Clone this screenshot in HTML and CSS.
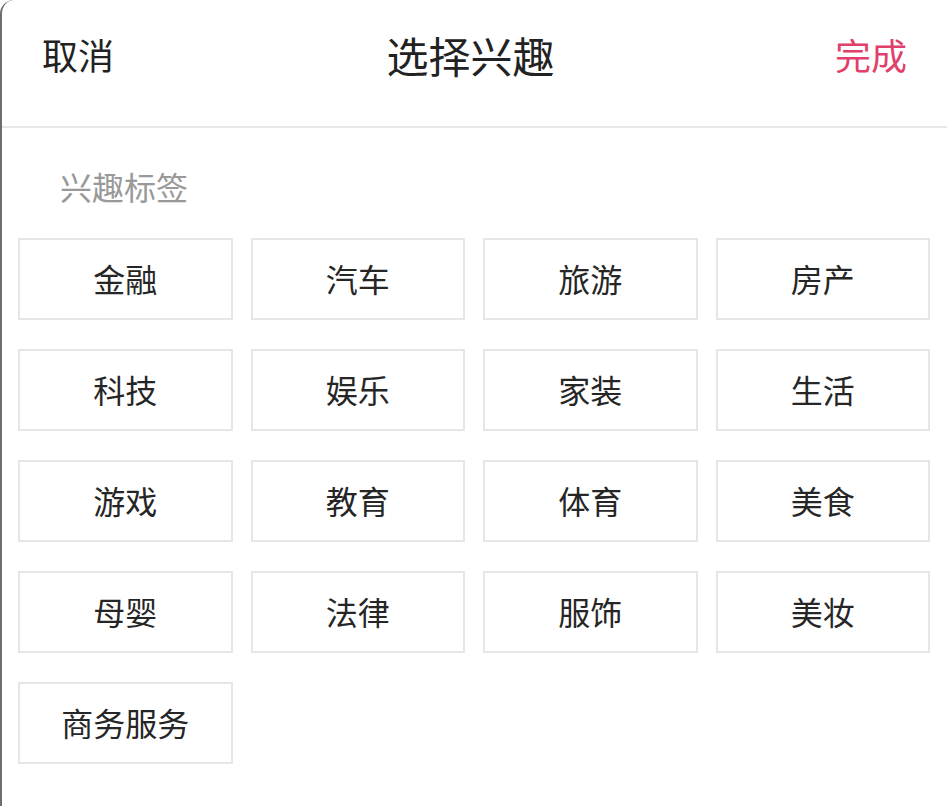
FILE: index.html
```html
<!DOCTYPE html>
<html lang="zh-CN">

<head>
    <meta charset="UTF-8">
    <meta name="viewport" content="width=device-width, initial-scale=1.0">
    <title>选择兴趣</title>
    <link rel="stylesheet" href="styles.css">
</head>

<body>
    <div class="sheet">
        <div class="header">
            <span class="cancel">取消</span>
            <span class="title">选择兴趣</span>
            <span class="done">完成</span>
        </div>
        <div class="section">
            <p class="label">兴趣标签</p>
            <div class="tags">
                <div class="tag">金融</div>
                <div class="tag">汽车</div>
                <div class="tag">旅游</div>
                <div class="tag">房产</div>
                <div class="tag">科技</div>
                <div class="tag">娱乐</div>
                <div class="tag">家装</div>
                <div class="tag">生活</div>
                <div class="tag">游戏</div>
                <div class="tag">教育</div>
                <div class="tag">体育</div>
                <div class="tag">美食</div>
                <div class="tag">母婴</div>
                <div class="tag">法律</div>
                <div class="tag">服饰</div>
                <div class="tag">美妆</div>
                <div class="tag">商务服务</div>
            </div>
        </div>
    </div>
</body>

</html>
```

FILE: styles.css
```css
body {
    margin: 0;
    font-family: "Noto Sans CJK SC", "Noto Sans", sans-serif;
    background-color: #fff;
    color: #222;
}

.sheet {
    min-height: 806px;
    border-left: 2px solid #6e6e6e;
    border-top-left-radius: 14px;
    box-sizing: border-box;
}

.header {
    height: 128px;
    border-bottom: 2px solid #e8e8e8;
    display: flex;
    align-items: center;
    justify-content: space-between;
    padding: 0 40px 18px 40px;
    box-sizing: border-box;
}

.cancel {
    font-size: 36px;
    color: #222;
}

.title {
    font-size: 42px;
    color: #222;
    margin-right: 8px;
}

.done {
    font-size: 36px;
    color: #e0406a;
}

.section {
    padding: 0 17px 0 16px;
}

.label {
    margin: 34px 0 0 42px;
    font-size: 32px;
    line-height: 48px;
    color: #999;
}

.tags {
    margin-top: 28px;
    display: grid;
    grid-template-columns: repeat(4, 1fr);
    column-gap: 18px;
    row-gap: 29px;
}

.tag {
    height: 82px;
    border: 2px solid #e6e6e6;
    box-sizing: border-box;
    display: flex;
    align-items: center;
    justify-content: center;
    padding-bottom: 3px;
    font-size: 32px;
    color: #262626;
}
```
